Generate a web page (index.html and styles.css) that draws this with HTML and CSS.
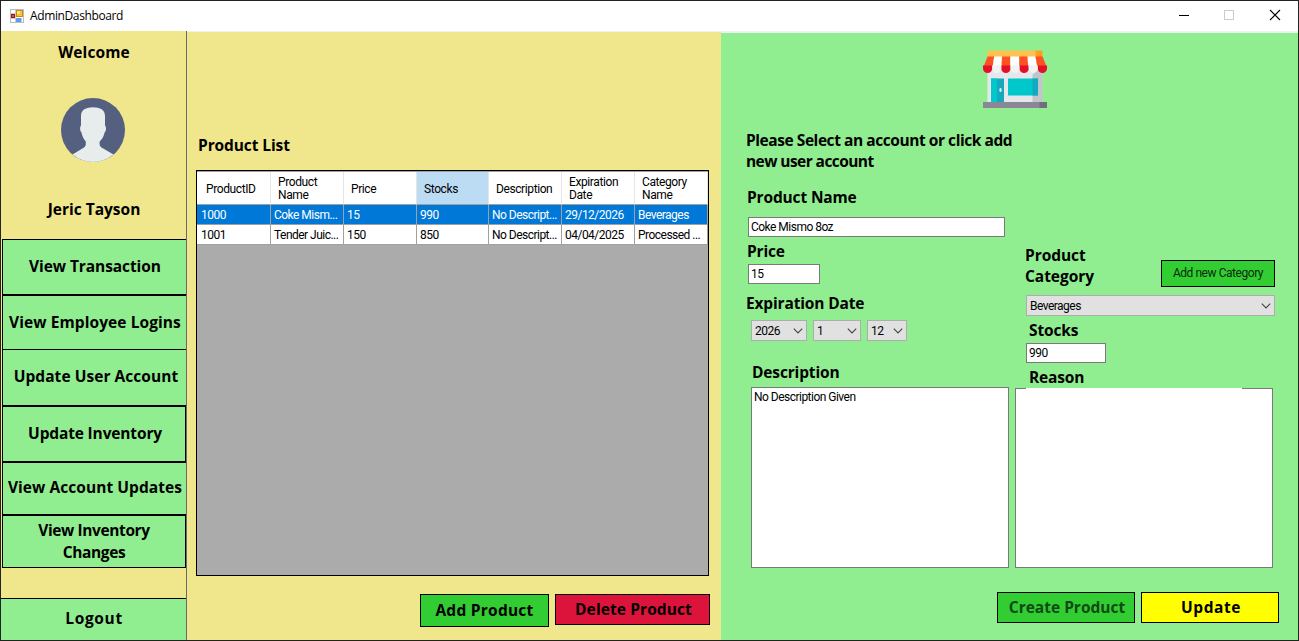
FILE: index.html
```html
<!DOCTYPE html>
<html lang="en">
<head>
<meta charset="utf-8">
<title>AdminDashboard</title>
<link rel="stylesheet" href="styles.css">
</head>
<body>
<div class="window">
  <header class="titlebar">
    <svg class="app-icon" width="14" height="14" viewBox="0 0 14 14">
      <rect x="0.5" y="0.5" width="13" height="13" fill="#fff" stroke="#b9bcc0"/>
      <path d="M5.500 1v12M1 4.500h5M1 9.500h5M11.500 9v4" stroke="#c9ccd0" fill="none"/>
      <rect x="6.500" y="1.500" width="6" height="6" fill="#f7c52c" stroke="#c98a10" stroke-width="1"/>
      <rect x="7" y="2" width="3" height="3" fill="#ffe58a"/>
      <rect x="1.500" y="5.500" width="3" height="3" fill="#d8483a" stroke="#9e1c14" stroke-width="1"/>
      <rect x="6" y="9" width="5" height="4" fill="#5c9cea"/>
    </svg>
    <span class="title">AdminDashboard</span>
    <svg class="controls" width="104" height="30" viewBox="0 0 104 30">
      <path d="M1 15.500h10" stroke="#000" fill="none"/>
      <rect x="46.500" y="10.500" width="9" height="9" fill="none" stroke="#ccc"/>
      <path d="M92 10l10 10M102 10l-10 10" stroke="#000" stroke-width="1.100" fill="none"/>
    </svg>
  </header>
  <div class="content">
    <aside class="sidebar">
      <div class="heading welcome">Welcome</div>
      <svg class="avatar" width="64" height="64" viewBox="0 0 64 64">
        <circle cx="32" cy="32" r="32" fill="#556080"/>
        <path d="M11.500 56.500L23 49.600Q24.800 48.500 24.800 46.200V43.500C22.500 41 21 37.500 20.500 34.500C18.800 33.500 18.700 28.500 20 27.500V18C20 12 25 9.300 32 9.300S44 12 44 18V27.500C45.500 28.500 45.300 33.500 43.600 34.500C43 37.500 41.500 41 38.600 43.500V46.200Q38.600 48.500 40.500 49.600L52.500 56.500A32 32 0 0 1 11.500 56.500Z" fill="#e7eced"/>
      </svg>
      <div class="heading username">Jeric Tayson</div>
      <nav class="menu">
        <button class="item h56 t1">View Transaction</button>
        <button class="item h55 t2">View Employee Logins</button>
        <button class="item h56 no-top t3">Update User Account</button>
        <button class="item h56 boxed t4">Update Inventory</button>
        <button class="item h53 t5">View Account Updates</button>
        <button class="item h53 boxed t6">View Inventory<br>Changes</button>
      </nav>
      <button class="logout">Logout</button>
    </aside>
    <main class="products">
      <h1 class="heading list-title">Product List</h1>
      <div class="grid-box">
        <div class="grid">
          <div class="th">ProductID</div><div class="th">Product<br>Name</div><div class="th">Price</div><div class="th active">Stocks</div><div class="th">Description</div><div class="th">Expiration<br>Date</div><div class="th">Category<br>Name</div>
          <div class="td sel">1000</div><div class="td sel">Coke Mism...</div><div class="td sel">15</div><div class="td sel">990</div><div class="td sel">No Descript...</div><div class="td sel date">29/12/2026</div><div class="td sel">Beverages</div>
          <div class="td">1001</div><div class="td">Tender Juic...</div><div class="td">150</div><div class="td">850</div><div class="td">No Descript...</div><div class="td date">04/04/2025</div><div class="td">Processed ...</div>
        </div>
      </div>
      <div class="actions">
        <button class="btn add">Add Product</button>
        <button class="btn delete">Delete Product</button>
      </div>
    </main>
    <section class="details">
      <svg class="store" width="66" height="60" viewBox="-0.5 0 66 60">
        <rect x="5" y="20" width="49" height="33" fill="#e6e7eb"/>
        <path d="M54 20h6v33h-10V25z" fill="#c3c5cd"/>
        <rect x="5" y="0.500" width="49" height="7" fill="#ffc250"/>
        <path d="M53 .5h7v7h-7z" fill="#ff9f22"/>
        <path d="M5 6.500h6.700L10 18H.5z" fill="#ff5023"/><path d="M11.700 6.500h7.800L19 18h-9z" fill="#fff"/>
        <path d="M19.500 6.500h8.300V18H19z" fill="#ff5023"/><path d="M27.800 6.500h9V18h-9z" fill="#fff"/>
        <path d="M36.800 6.500h8.300l.6 11.500h-8.900z" fill="#ff5023"/><path d="M45.100 6.500H53l2 11.500h-9.300z" fill="#fff"/>
        <path d="M53 6.500h7L64.600 18H55z" fill="#ff5023"/>
        <path d="M.5 15.500h9.200v3a4.600 4.600 0 0 1-9.200 0zM18.800 15.500H28v3a4.600 4.600 0 0 1-9.200 0zM37 15.500h9.200v3a4.600 4.600 0 0 1-9.200 0zM55.300 15.500h9.200v3a4.600 4.600 0 0 1-9.200 0z" fill="#e50f2a"/>
        <path d="M9.700 15.500h9.100v3a4.550 4.600 0 0 1-9.100 0zM28 15.500h9v3a4.500 4.600 0 0 1-9 0zM46.200 15.500h9.100v3a4.550 4.600 0 0 1-9.100 0z" fill="#f2f2f4"/>
        <rect x="8.500" y="28.500" width="13" height="24" fill="#14a9bf"/><rect x="8.500" y="28.500" width="6" height="24" fill="#00c7ca"/>
        <ellipse cx="18" cy="40" rx="1.100" ry="2" fill="#fff"/>
        <rect x="25.500" y="28.500" width="30" height="17" fill="#00c7ca"/><rect x="50" y="28.500" width="5.500" height="17" fill="#14a9bf"/>
        <rect x=".5" y="52" width="57" height="6" fill="#8a8796"/><rect x="57" y="52" width="7.500" height="6" fill="#706e7d"/>
      </svg>
      <p class="heading notice"><span class="n1">Please Select an account or click add</span><br><span class="n2">new user account</span></p>
      <div class="form">
        <div class="col-left">
          <div class="heading l-name">Product Name</div>
          <div class="field f-name">Coke Mismo 8oz</div>
          <div class="heading l-price">Price</div>
          <div class="field f-price">15</div>
          <div class="heading l-exp">Expiration Date</div>
          <div class="dates">
            <div class="select s-year">2026<svg class="chev" width="10" height="6" viewBox="0 0 10 6"><path d="M.8.700L5 4.900 9.200.700"/></svg></div>
            <div class="select s-month">1<svg class="chev" width="10" height="6" viewBox="0 0 10 6"><path d="M.8.700L5 4.900 9.200.700"/></svg></div>
            <div class="select s-day">12<svg class="chev" width="10" height="6" viewBox="0 0 10 6"><path d="M.8.700L5 4.900 9.200.700"/></svg></div>
          </div>
          <div class="heading l-desc">Description</div>
          <div class="field area">No Description Given</div>
        </div>
        <div class="col-right">
          <div class="cat-row">
            <div class="heading l-cat">Product<br>Category</div>
            <button class="btn-small">Add new Category</button>
          </div>
          <div class="select s-cat">Beverages<svg class="chev" width="10" height="6" viewBox="0 0 10 6"><path d="M.8.700L5 4.900 9.200.700"/></svg></div>
          <div class="heading l-stock">Stocks</div>
          <div class="field f-stock">990</div>
          <div class="heading l-reason">Reason</div>
          <div class="reason"><div class="reason-gap"></div></div>
        </div>
      </div>
      <div class="actions-right">
        <button class="btn create">Create Product</button>
        <button class="btn update">Update</button>
      </div>
    </section>
  </div>
</div>
</body>
</html>
```
FILE: styles.css
```css
* { box-sizing: border-box; }
body { margin: 0; overflow: hidden; font-family: Roboto, "Liberation Sans", Arial, sans-serif; font-size: 12px; letter-spacing: -0.52px; color: #000; }
button { font: inherit; letter-spacing: inherit; color: inherit; padding: 0; margin: 0; border-radius: 0; }
.window { width: 1299px; height: 641px; border: 1px solid #222; display: flex; flex-direction: column; background: #fff; }
.titlebar { height: 30px; flex: none; display: flex; align-items: center; padding-left: 9px; }
.app-icon { margin-bottom: 1px; }
.title { font: 12px/30px "Open Sans", sans-serif; letter-spacing: -0.38px; margin-left: 6px; }
.controls { margin-left: auto; margin-right: 16px; margin-top: -2px; }
.content { flex: 1; display: flex; background: #f0f0f0; min-height: 0; }
.heading, .item, .logout, .btn { font-family: "Open Sans", sans-serif; font-weight: 700; font-size: 15.5px; line-height: 21px; letter-spacing: -0.15px; }
.heading { margin: 0; white-space: nowrap; }

.sidebar { width: 186px; flex: none; background: #f0e68c; border-right: 1px solid #6b6b6b; display: flex; flex-direction: column; }
.welcome { text-align: center; margin-top: 11px; letter-spacing: 0.1px; padding-left: 1px; }
.avatar { margin: 35px 0 0 60px; }
.username { text-align: center; margin-top: 37px; padding-left: 1px; letter-spacing: 0; }
.menu { margin: 19px 0 0 1px; display: flex; flex-direction: column; }
.item { background: #90ee90; border: 1px solid #000; border-right: 0; white-space: nowrap; padding-bottom: 2px; }
.item.boxed { border-right: 1px solid #000; }
.item.no-top { border-top: 0; }
.item.t1 { letter-spacing: -0.08px; padding-left: 1px; }
.item.t2 { letter-spacing: 0.08px; padding: 0 0 0 1px; }
.item.t3 { letter-spacing: 0.05px; padding-left: 3px; }
.item.t4 { padding-left: 2px; }
.item.t5 { letter-spacing: 0.06px; padding-left: 1px; }
.item.t6 { letter-spacing: -0.4px; line-height: 22px; }
.h56 { height: 56px; }
.h55 { height: 55px; }
.h53 { height: 53px; }
.logout { margin-top: auto; height: 42px; background: #90ee90; border: 0; border-top: 1px solid #000; letter-spacing: 0.65px; padding: 0 0 2px 1px; }

.products { width: 534px; flex: none; margin-top: 1px; background: #f0e68c; padding: 103px 12px 0 9px; }
.list-title { padding-left: 2px; letter-spacing: -0.1px; }
.grid-box { margin-top: 14px; height: 406px; width: 513px; border: 1px solid #000; background: #ababab; }
.grid { display: grid; grid-template-columns: 74px 73px 73px 72px 73px 73px 73px; grid-template-rows: 33px 20px 20px; border-top: 1px solid #a0a0a0; }
.th { background: #fff; border-right: 1px solid #e5e5e5; border-bottom: 1px solid #a0a0a0; padding: 2px 0 0 7px; line-height: 13px; display: flex; align-items: center; letter-spacing: -0.4px; }
.th:first-child { padding-left: 9px; }
.th.active { background: #bcdcf4; }
.td { background: #fff; border-right: 1px solid #a0a0a0; border-bottom: 1px solid #a0a0a0; padding-left: 3px; line-height: 20px; white-space: nowrap; }
.td:nth-child(7n+1) { padding-left: 4px; }
.td.sel { background: #0078d7; color: #fff; }
.actions { display: flex; align-items: flex-start; gap: 6px; margin: 18px 0 0 224px; }
.btn { border: 1px solid #000; white-space: nowrap; flex: none; }
.add { width: 129px; height: 33px; background: #32cd32; letter-spacing: 0.25px; }
.delete { width: 155px; height: 31px; background: #dc143c; letter-spacing: 0.1px; padding-left: 2px; }

.details { flex: 1; margin-top: 2px; background: #90ee90; padding: 17px 0 0 25px; }
.store { display: block; margin-left: 236px; }
.notice { margin-top: 20px; }
.n1 { letter-spacing: -0.44px; }
.n2 { letter-spacing: -0.57px; }
.form { display: flex; height: 400px; }
.col-left { width: 263px; margin-top: 15px; }
.col-right { width: 266px; margin: 73px 0 0 6px; }
.field { background: #fff; border: 1px solid #7a7a7a; height: 20px; line-height: 18px; padding-left: 2px; }
.l-name { padding-left: 1px; }
.f-name { width: 257px; margin: 9px 0 0 2px; }
.l-price { margin-top: 4px; padding-left: 1px; }
.f-price { width: 72px; margin: 2px 0 0 2px; }
.l-exp { margin-top: 9px; }
.dates { display: flex; gap: 6px; margin: 6px 0 0 5px; }
.select { height: 21px; background: #e1e1e1; border: 1px solid #adadad; line-height: 20px; padding: 0 3px; display: flex; justify-content: space-between; align-items: center; }
.chev { fill: none; stroke: #444; stroke-width: 1.100; }
.s-year { width: 56px; }
.s-month { width: 48px; }
.s-day { width: 40px; }
.l-desc { margin-top: 21px; padding-left: 6px; }
.area { width: 258px; height: 181px; margin: 4px 0 0 5px; }
.cat-row { display: flex; justify-content: space-between; width: 260px; padding-left: 10px; }
.l-cat { letter-spacing: -0.05px; }
.btn-small { width: 114px; height: 27px; margin-top: 15px; background: #32cd32; border: 1px solid #000; color: #0b2b0b; padding-bottom: 1px; letter-spacing: -0.45px; }
.s-cat { width: 249px; margin: 8px 0 0 11px; }
.l-stock { margin-top: 4px; padding-left: 14px; }
.f-stock { width: 80px; margin: 2px 0 0 11px; }
.l-reason { margin-top: 4px; padding-left: 14px; }
.reason { width: 258px; height: 180px; background: #fff; border: 1px solid #7a7a7a; }
.reason-gap { width: 216px; height: 1px; margin: -1px 0 0 10px; background: #fff; }
.actions-right { display: flex; gap: 6px; margin: 20px 0 0 251px; }
.create { width: 138px; height: 31px; background: #32cd32; color: #0e4a12; letter-spacing: 0; padding-left: 2px; }
.update { width: 138px; height: 31px; background: #ff0; letter-spacing: 0.6px; padding-left: 2px; }
```
